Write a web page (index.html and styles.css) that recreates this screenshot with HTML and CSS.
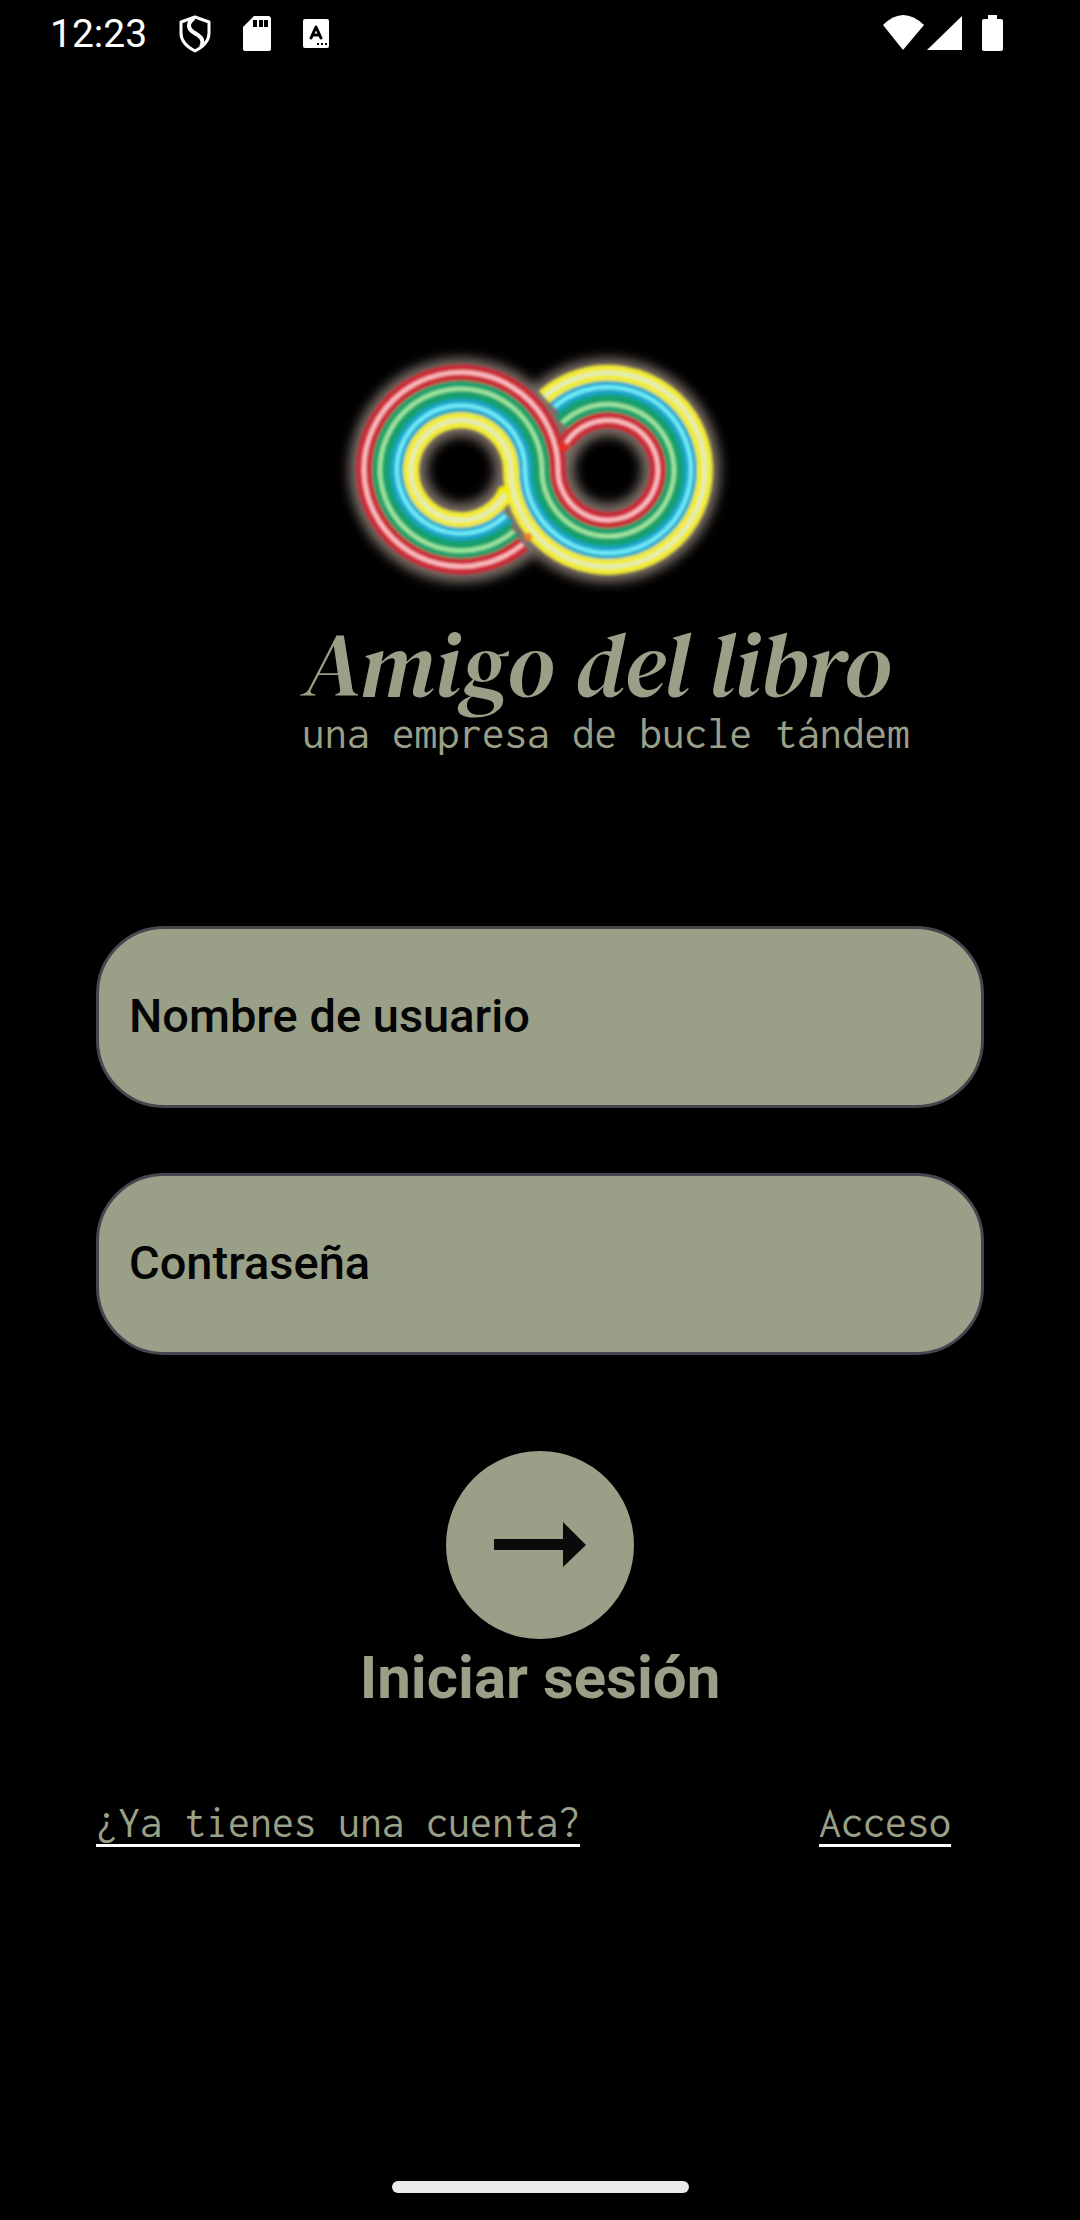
FILE: index.html
```html
<!DOCTYPE html>
<html lang="es">
<head>
<meta charset="utf-8">
<meta name="viewport" content="width=device-width, initial-scale=1">
<title>Amigo del libro</title>
<link rel="stylesheet" href="styles.css">
</head>
<body>
<header class="status">
  <div class="status-left">
    <time class="clock">12:23</time>
    <svg class="icon" width="32" height="38" viewBox="0 0 32 38" fill="none" stroke="#fff" stroke-width="3">
      <path d="M16 2 L30 7 V18 C30 26 24 32 16 36 C8 32 2 26 2 18 V7 Z" stroke-linejoin="round"/>
      <path d="M15 3 C8 8 9 14 14 17 C21 21 26 24 22 32" stroke-width="4"/>
    </svg>
    <svg class="icon" width="28" height="36" viewBox="0 0 28 36">
      <path fill="#fff" d="M11 0 H25 Q28 0 28 3 V33 Q28 35 25 35 H3 Q0 35 0 33 V11 Z"/>
      <path d="M10 4h4v7h-4z M16 4h4v7h-4z M21 4h4v7h-4z"/>
    </svg>
    <svg class="icon" width="26" height="32" viewBox="0 0 26 32">
      <rect y="1" width="26" height="29" rx="2" fill="#fff"/>
      <path d="M8 20 L13 9 L18 20 M10 17 H16" fill="none" stroke="#000" stroke-width="3" stroke-linecap="round" stroke-linejoin="round"/>
      <path d="M14 25h2v2h-2z M18 25h2v2h-2z M22 25h2v2h-2z"/>
    </svg>
  </div>
  <svg class="icon" width="122" height="38" viewBox="0 0 122 38" fill="#fff">
    <path d="M0 10 Q20 -10 41 10 L20 35 Z"/>
    <path d="M79 1 V35 H44 Z"/>
    <path d="M105 0 H114 V4 H118 Q120 4 120 6 V34 Q120 36 118 36 H101 Q99 36 99 34 V6 Q99 4 101 4 H105 Z"/>
  </svg>
</header>

<main class="screen">
  <section class="brand">
    <svg class="logo" width="456" height="270" viewBox="301 329 456 270" fill="none">
      <defs>
        <filter id="halo" filterUnits="userSpaceOnUse" x="302" y="330" width="456" height="270"><feGaussianBlur stdDeviation="6"/></filter>
        <filter id="soft" filterUnits="userSpaceOnUse" x="302" y="330" width="456" height="270"><feGaussianBlur stdDeviation="1.5"/></filter>
        <path id="red" d="M522 543 A97 97 0 1 1 557 469 A50 50 0 1 0 565 442"/>
        <path id="green" d="M513 530 A81 81 0 1 1 541 469 A66 66 0 1 0 561 422"/>
        <path id="blue" d="M505 514 A64 64 0 1 1 524 469 A83 83 0 1 0 553 406"/>
        <path id="yellow" d="M504 493 A50 50 0 1 1 510 469 A97 97 0 1 0 543 396"/>
      </defs>
      <g filter="url(#halo)" stroke="#7c7068">
        <circle cx="460" cy="469" r="73" stroke-width="78"/>
        <circle cx="607" cy="469" r="73" stroke-width="78"/>
      </g>
      <g filter="url(#soft)">
        <g stroke-width="16">
          <use href="#blue" stroke="#17a0a0" stroke-width="22"/>
          <use href="#green" stroke="#13a06c" stroke-width="18"/>
          <use href="#yellow" stroke="#f2ec34"/>
          <use href="#red" stroke="#cc2c36"/>
        </g>
        <use href="#blue" stroke="#1ca6cc" stroke-width="12"/>
        <circle cx="563" cy="446" r="5" fill="#ee2a20"/>
        <circle cx="502" cy="491" r="6" fill="#f4ec10"/>
        <circle cx="527" cy="536" r="4" fill="#f07a2a"/>
        <g stroke-width="4">
          <use href="#blue" stroke="#74f0fc"/>
          <use href="#green" stroke="#a6eaa2"/>
          <use href="#yellow" stroke="#e2ecc0"/>
          <use href="#red" stroke="#ffc4c8"/>
        </g>
      </g>
    </svg>
    <h1 class="title">Amigo del libro</h1>
    <p class="tagline">una empresa de bucle tándem</p>
  </section>

  <form class="form">
    <input class="field" type="text" placeholder="Nombre de usuario" aria-label="Nombre de usuario">
    <input class="field" type="password" placeholder="Contraseña" aria-label="Contraseña">
    <button class="submit" type="button" aria-labelledby="submit-text">
      <svg width="92" height="46" viewBox="0 0 92 46"><path fill="#0a0a0a" d="M0 17 H69 V0 L92 23 L69 45 V28 H0 Z"/></svg>
    </button>
    <p class="submit-text" id="submit-text">Iniciar sesión</p>
  </form>

  <nav class="links">
    <a class="link" href="#cuenta">¿Ya tienes una cuenta?</a>
    <a class="link" href="#acceso">Acceso</a>
  </nav>
</main>

<footer class="home"><div class="home-bar"></div></footer>
</body>
</html>
```
FILE: styles.css
```css
* {
  box-sizing: border-box;
  margin: 0;
}

body {
  min-height: 100vh;
  display: flex;
  flex-direction: column;
  background: #000;
  color: #9a9f87;
  font-family: Roboto, "Liberation Sans", sans-serif;
}

.status {
  display: flex;
  justify-content: space-between;
  align-items: center;
  height: 68px;
  padding: 0 75px 0 50px;
}

.status-left {
  display: flex;
  align-items: center;
  gap: 32px;
}

.clock {
  color: #fff;
  font-size: 39px;
  line-height: 48px;
}

.icon,
.logo {
  display: block;
}

.screen {
  flex: 1;
  display: flex;
  flex-direction: column;
  padding: 262px 96px 0;
}

.brand {
  padding-left: 206px;
}

.title {
  margin-top: 19px;
  font: italic 400 91px/90px "DM Serif Display", "Liberation Serif", serif;
  white-space: nowrap;
}

.tagline,
.link {
  font-family: Inconsolata, "Noto Sans Mono CJK SC", "Liberation Mono", monospace;
  font-size: 44px;
  line-height: 44px;
  white-space: nowrap;
}

.tagline {
  font-size: 45px;
  line-height: 48px;
}

.form {
  display: flex;
  flex-direction: column;
  align-items: center;
  margin-top: 169px;
}

.field {
  width: 100%;
  height: 182px;
  margin-bottom: 65px;
  padding: 0 30px 4px;
  border: 3px solid #49454f;
  border-radius: 68px;
  background: #9a9f87;
  color: #050505;
  font: 500 47px/56px Roboto, "Liberation Sans", sans-serif;
}

.field::placeholder {
  color: #050505;
  opacity: 1;
}

.submit {
  display: grid;
  place-items: center;
  width: 188px;
  height: 188px;
  margin-top: 31px;
  border: 0;
  border-radius: 50%;
  background: #9a9f87;
}

.submit-text {
  font-size: 60px;
  font-weight: 700;
  line-height: 78px;
}

.links {
  display: flex;
  justify-content: space-between;
  margin-top: 83px;
  padding-right: 33px;
}

.link {
  border-bottom: 3px solid #fff;
  color: inherit;
  text-decoration: none;
}

.home {
  display: flex;
  justify-content: center;
  padding-bottom: 27px;
}

.home-bar {
  width: 297px;
  height: 12px;
  border-radius: 6px;
  background: #ebebeb;
}
```
